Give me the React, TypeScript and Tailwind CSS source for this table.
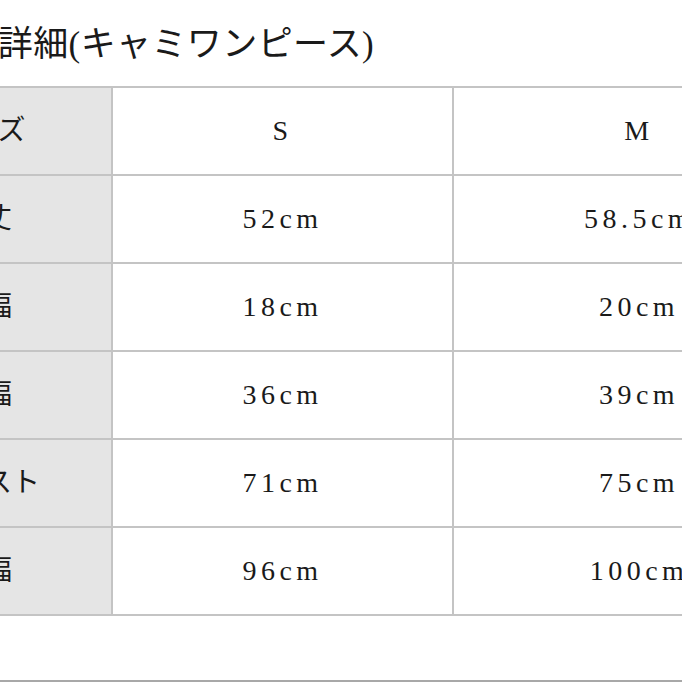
import React from "react";

const rows: [string, string, string][] = [
  ["サイズ", "S", "M"],
  ["着丈", "52cm", "58.5cm"],
  ["肩幅", "18cm", "20cm"],
  ["身幅", "36cm", "39cm"],
  ["ウエスト", "71cm", "75cm"],
  ["裾幅", "96cm", "100cm"],
];

const serif = { fontFamily: '"Liberation Serif", "Noto Sans CJK JP", serif' };

export default function App() {
  return (
    <div className="w-[682px] h-[682px] overflow-hidden bg-white text-[#1a1a1a]" style={serif}>
      <div className="h-[86px] pt-[27px] overflow-hidden">
        <div className="ml-[-73px] whitespace-nowrap text-[35px] leading-[36px] tracking-[0.4px]">
          商品詳細(キャミワンピース)
        </div>
      </div>
      <div className="ml-[-145px] w-max grid grid-cols-[254px_339px_370px] gap-[2px] p-[2px] bg-[#c4c4c4]">
        {rows.map((r, i) => (
          <React.Fragment key={i}>
            <div className="h-[86px] bg-[#e5e5e5] flex items-center justify-center text-[28px] whitespace-nowrap">
              {r[0]}
            </div>
            <div className="h-[86px] bg-white flex items-center justify-center text-[28px] tracking-[4.5px] whitespace-nowrap">
              {r[1]}
            </div>
            <div className="h-[86px] bg-white flex items-center justify-center text-[28px] tracking-[4.5px] whitespace-nowrap">
              {r[2]}
            </div>
          </React.Fragment>
        ))}
      </div>
      <div className="h-[64px]" />
      <div className="h-[2px] bg-[#a8a8a8]" />
    </div>
  );
}
